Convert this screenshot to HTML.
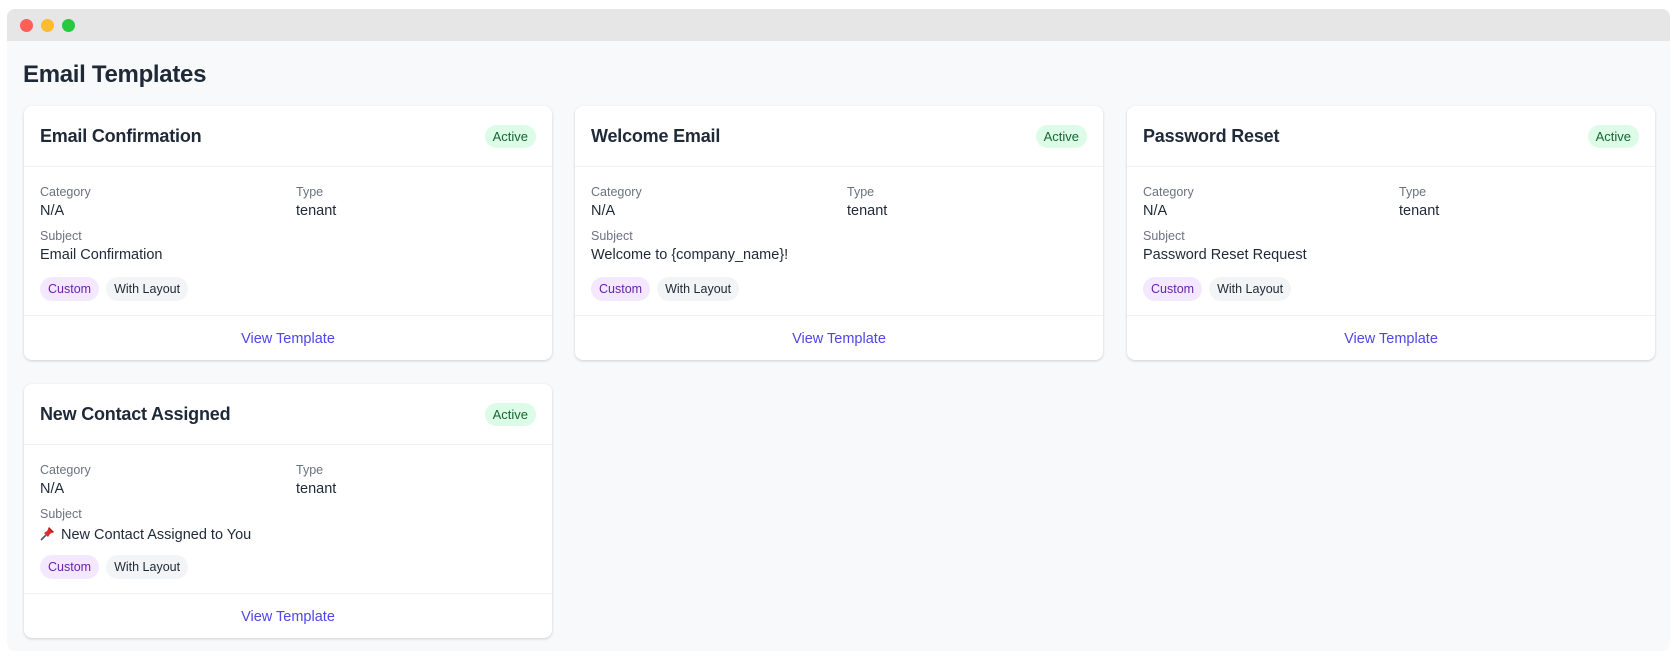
<!DOCTYPE html>
<html><head><meta charset="utf-8"><style>
*{box-sizing:border-box;margin:0;padding:0}
body{width:1677px;height:661px;background:#fff;font-family:"Liberation Sans",sans-serif;color:#1f2937;position:relative;overflow:hidden}
.frame{position:absolute;left:7px;top:9px;width:1663px;height:642px;background:#f8f9fb;border-radius:8px;overflow:hidden}
.bar{height:32px;background:#e6e6e6;position:relative}
.dot{position:absolute;top:10px;width:13px;height:13px;border-radius:50%}
h1{position:absolute;left:16px;top:52px;font-size:24px;font-weight:bold;color:#1f2937;letter-spacing:-0.3px}
.card{position:absolute;width:528px;height:254px;background:#fff;border-radius:8px;box-shadow:0 1px 3px rgba(0,0,0,.12),0 1px 2px rgba(0,0,0,.06)}
.hd{height:61px;border-bottom:1px solid #eef0f2;padding:0 16px;display:flex;align-items:center;justify-content:space-between}
.hd .t{font-size:18px;font-weight:bold;color:#1f2937;letter-spacing:-0.2px}
.badge{background:#dcfce7;color:#166534;font-size:13px;border-radius:12px;padding:0 8px;height:23px;line-height:23px}
.bd{height:149px;border-bottom:1px solid #eef0f2;position:relative}
.lab{font-size:12.5px;color:#6b7280;position:absolute}
.val{font-size:14.5px;color:#1f2937;position:absolute}
.chips{position:absolute;left:16px;top:110px;display:flex;gap:7px}
.chip{height:24px;border-radius:12px;font-size:12.5px;padding:0 8px;line-height:24px}
.c1{background:#f3e8ff;color:#6b21a8}.c2{background:#f3f4f6;color:#1f2937}
.ft{height:43px;text-align:center;line-height:47px;color:#4f46e5;font-size:14.5px}
</style></head><body>
<div class="frame">
<div class="bar"><div class="dot" style="left:13px;background:#fe5f57"></div><div class="dot" style="left:34px;background:#febc2e"></div><div class="dot" style="left:55px;background:#28c840"></div></div>
<h1>Email Templates</h1>

<div class="card" style="left:17px;top:97px">
<div class="hd"><span class="t">Email Confirmation</span><span class="badge">Active</span></div>
<div class="bd"><span class="lab" style="left:16px;top:18px">Category</span><span class="val" style="left:16px;top:36px">N/A</span><span class="lab" style="left:272px;top:18px">Type</span><span class="val" style="left:272px;top:36px">tenant</span><span class="lab" style="left:16px;top:62px">Subject</span><span class="val" style="left:16px;top:80px">Email Confirmation</span><div class="chips"><span class="chip c1">Custom</span><span class="chip c2">With Layout</span></div></div>
<div class="ft">View Template</div></div>

<div class="card" style="left:568px;top:97px">
<div class="hd"><span class="t">Welcome Email</span><span class="badge">Active</span></div>
<div class="bd"><span class="lab" style="left:16px;top:18px">Category</span><span class="val" style="left:16px;top:36px">N/A</span><span class="lab" style="left:272px;top:18px">Type</span><span class="val" style="left:272px;top:36px">tenant</span><span class="lab" style="left:16px;top:62px">Subject</span><span class="val" style="left:16px;top:80px">Welcome to {company_name}!</span><div class="chips"><span class="chip c1">Custom</span><span class="chip c2">With Layout</span></div></div>
<div class="ft">View Template</div></div>

<div class="card" style="left:1120px;top:97px">
<div class="hd"><span class="t">Password Reset</span><span class="badge">Active</span></div>
<div class="bd"><span class="lab" style="left:16px;top:18px">Category</span><span class="val" style="left:16px;top:36px">N/A</span><span class="lab" style="left:272px;top:18px">Type</span><span class="val" style="left:272px;top:36px">tenant</span><span class="lab" style="left:16px;top:62px">Subject</span><span class="val" style="left:16px;top:80px">Password Reset Request</span><div class="chips"><span class="chip c1">Custom</span><span class="chip c2">With Layout</span></div></div>
<div class="ft">View Template</div></div>

<div class="card" style="left:17px;top:375px">
<div class="hd"><span class="t">New Contact Assigned</span><span class="badge">Active</span></div>
<div class="bd"><span class="lab" style="left:16px;top:18px">Category</span><span class="val" style="left:16px;top:36px">N/A</span><span class="lab" style="left:272px;top:18px">Type</span><span class="val" style="left:272px;top:36px">tenant</span><span class="lab" style="left:16px;top:62px">Subject</span><span class="val" style="left:16px;top:80px"><svg width="16" height="16" viewBox="0 0 16 16" style="vertical-align:-2px;margin-right:5px"><path d="M1 15 L6 10" stroke="#555" stroke-width="1.6"/><path d="M4 8 L8 12 L10 9 L13 7 L9 3 L7 6 Z" fill="#dd2e2e"/><path d="M9 2 L14 7 L12.5 8 L8 3.5 Z" fill="#b81f1f"/></svg>New Contact Assigned to You</span><div class="chips"><span class="chip c1">Custom</span><span class="chip c2">With Layout</span></div></div>
<div class="ft">View Template</div></div>
</div>
</body></html>
